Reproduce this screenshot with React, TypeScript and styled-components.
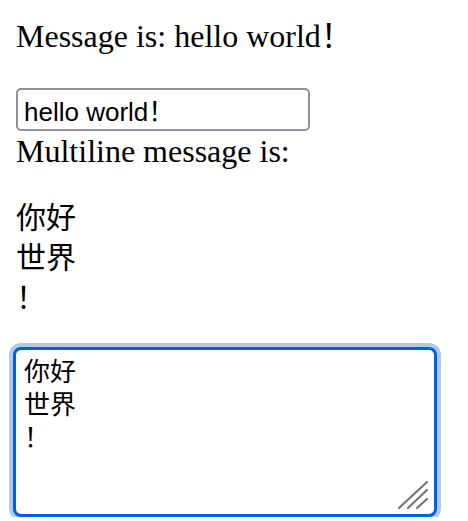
import React, { useEffect, useRef, useState } from 'react'
import styled, { createGlobalStyle } from 'styled-components'

const GlobalStyle = createGlobalStyle`
  html, body {
    margin: 0;
    padding: 0;
    background: #ffffff;
  }
`

const PAGE = styled.div`
  display: flex;
  flex-direction: column;
  align-items: flex-start;
  padding: 0 16px;
  font-family: 'Liberation Serif', 'Noto Sans CJK SC', serif;
  font-size: 32px;
  color: #000000;
`

const LINE = styled.div<{ $top?: number }>`
  margin-top: ${({ $top }) => $top || 0}px;
  line-height: 37px;
  white-space: nowrap;
`

const MULTILINE = styled.div`
  margin-top: 28px;
  font-size: 30px;
  line-height: 40px;
  white-space: pre-line;
`

const TEXT_INPUT = styled.input`
  box-sizing: border-box;
  margin: 33px 0 0 0;
  width: 294px;
  height: 43px;
  padding: 2px 6px;
  border: 2px solid #8f8f9d;
  border-radius: 5px;
  font-family: 'Liberation Sans', 'Noto Sans CJK SC', sans-serif;
  font-size: 26px;
  color: #000000;
  background: #ffffff;
  outline: none;
`

const AREA_WRAP = styled.div`
  position: relative;
  margin: 29px 0 0 -3px;
`

const TEXT_AREA = styled.textarea`
  display: block;
  box-sizing: border-box;
  width: 424px;
  height: 170px;
  margin: 0;
  padding: 6px 8px;
  border: 3.5px solid #0060df;
  border-radius: 8px;
  box-shadow: 0 0 0 4px #b3c8ec;
  font-family: 'Liberation Serif', 'Noto Sans CJK SC', serif;
  font-size: 26px;
  line-height: 33px;
  color: #000000;
  caret-color: #000000;
  background: #ffffff;
  resize: none;
  outline: none;
  overflow: hidden;
`

const RESIZER = styled.svg`
  position: absolute;
  right: 8px;
  bottom: 7px;
  width: 32px;
  height: 30px;
  pointer-events: none;
`

export default function App() {
  const [message, setMessage] = useState('hello world！')
  const [multilineText, setMultilineText] = useState('你好\n世界\n！\n')
  const areaRef = useRef<HTMLTextAreaElement>(null)

  useEffect(() => {
    const el = areaRef.current
    if (el) {
      el.focus()
      el.setSelectionRange(el.value.length, el.value.length)
    }
  }, [])

  return (
    <PAGE>
      <GlobalStyle />
      <LINE $top={18}>Message is: {message}</LINE>
      <TEXT_INPUT value={message} onChange={(e) => setMessage(e.target.value)} />
      <LINE $top={2}>Multiline message is:</LINE>
      <MULTILINE>{multilineText}</MULTILINE>
      <AREA_WRAP>
        <TEXT_AREA
          ref={areaRef}
          value={multilineText}
          onChange={(e) => setMultilineText(e.target.value)}
        />
        <RESIZER viewBox="0 0 32 30">
          <g stroke="#757575" strokeWidth="2.2" strokeLinecap="round">
            <line x1="2" y1="28" x2="30" y2="2" />
            <line x1="11" y1="28" x2="30" y2="10" />
            <line x1="20" y1="28" x2="30" y2="19" />
          </g>
        </RESIZER>
      </AREA_WRAP>
    </PAGE>
  )
}
